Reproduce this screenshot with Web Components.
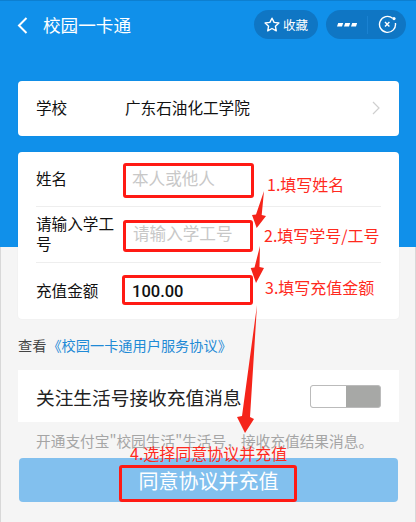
<!DOCTYPE html>
<html lang="zh"><head><meta charset="utf-8"><title>校园一卡通</title>
<style>
html,body{margin:0;padding:0;width:416px;height:522px;overflow:hidden;background:#f5f5f5}
</style></head><body>
<app-page>
  <nav-bar title-text="校园一卡通"></nav-bar>
  <white-card style="margin-top:37px"><form-row label="学校" height="55" chevron><span style="color:#111">广东石油化工学院</span></form-row></white-card>
  <white-card style="margin-top:16px">
    <form-row label="姓名" height="55" divider><span style="color:#c8c8c8;font-size:16.6px;margin-left:7px">本人或他人</span></form-row>
    <form-row label="请输入学工号" height="56" divider><span style="color:#c8c8c8;font-size:16.6px;margin-left:8px">请输入学工号</span></form-row>
    <form-row label="充值金额" height="56"><span style="color:#111;font-size:16.5px;font-weight:500;margin-left:7px;font-family:'Roboto','Noto Sans CJK SC',sans-serif">100.00</span></form-row>
  </white-card>
  <agree-link></agree-link>
  <toggle-row label="关注生活号接收充值消息"></toggle-row>
  <hint-text>开通支付宝"校园生活"生活号，接收充值结果消息。</hint-text>
  <submit-button>同意协议并充值</submit-button>
  <annotation-layer></annotation-layer>
</app-page>
<script>
const FONT = "'Noto Sans CJK SC','Noto Sans',sans-serif";
function def(name, html){
  customElements.define(name, class extends HTMLElement{
    connectedCallback(){
      if(this.shadowRoot) return;
      const r=this.attachShadow({mode:'open'});
      r.innerHTML = typeof html==='function'? html(this):html;
    }
  });
}
def('app-page',`<style>:host{display:flex;flex-direction:column;position:relative;width:416px;height:522px;overflow:hidden;box-sizing:border-box;font-family:${FONT};background:linear-gradient(#1090ea 0,#1090ea 246px,transparent 246px),linear-gradient(90deg,#d8d8d8 1px,#f5f5f5 1px,#f5f5f5 415px,#d8d8d8 415px);border-top:1px solid #0d7fd0}</style><slot></slot>`);
def('nav-bar',el=>`<style>
:host{display:flex;align-items:center;height:43px;color:#fff;box-sizing:border-box;padding:4px 10px 0 16px}
.t{font-size:17.6px;margin-left:15px;flex:1;line-height:1}
.pill{display:flex;align-items:center;height:29px;border-radius:15px;background:#0f76c4}
.fav{width:64px;margin-right:8px;justify-content:center;font-size:12.5px;gap:3px}
.menu{width:80px}
.dots{width:41px;display:flex;justify-content:center;border-right:1px solid #1a82d2;height:18px;align-items:center}
.x{flex:1;display:flex;justify-content:center}
</style>
<svg width="12" height="18" viewBox="0 0 12 18"><path d="M10.5 2 L3 9.5 L10.5 17" fill="none" stroke="#fff" stroke-width="2"/></svg>
<div class="t">${el.getAttribute('title-text')}</div>
<div class="pill fav"><svg width="16" height="15" viewBox="0 0 16 15"><path d="M8 1.2 L10.1 5.4 L14.9 6 L11.4 9.2 L12.3 13.8 L8 11.5 L3.7 13.8 L4.6 9.2 L1.1 6 L5.9 5.4 Z" fill="none" stroke="#fff" stroke-width="1.4" stroke-linejoin="round"/></svg><span>收藏</span></div>
<div class="pill menu"><div class="dots"><svg width="20" height="4" viewBox="0 0 20 4"><path d="M1.2 0h5l-1.2 3.5h-5zM8.2 0h5l-1.2 3.5h-5zM15.2 0h5l-1.2 3.5h-5z" fill="#fff"/></svg></div>
<div class="x"><svg width="19" height="19" viewBox="0 0 19 19"><path d="M14.6 3.2A8 8 0 1 0 17.4 8" fill="none" stroke="#fff" stroke-width="1.4"/><circle cx="16" cy="3.6" r="1.6" fill="#fff"/><path d="M7 7 L11.4 11.4 M11.4 7 L7 11.4" stroke="#fff" stroke-width="1.4"/></svg></div></div>`);
def('white-card',`<style>:host{display:block;margin:0 17px 0 18px;background:#fff;border-radius:4px;padding:0 18px;box-shadow:0 0 2px rgba(0,0,0,.05)}</style><slot></slot>`);
def('form-row',el=>{
  const h=el.getAttribute('height'), d=el.hasAttribute('divider'), c=el.hasAttribute('chevron');
  return `<style>:host{display:flex;align-items:center;height:${h}px;box-sizing:border-box;padding-bottom:3px;font-size:15.6px;color:#111;${d?'border-bottom:1px solid #eeeeee;':''}}
  .l{width:89px;flex:none;line-height:20px}
  .v{flex:1}
  svg{flex:none;margin-right:1px;margin-top:2px}</style>
  <div class="l">${el.getAttribute('label')}</div><div class="v"><slot></slot></div>
  ${c?'<svg width="8" height="14" viewBox="0 0 8 14"><path d="M1 1 L7 7 L1 13" fill="none" stroke="#cfcfcf" stroke-width="1.2"/></svg>':''}`;
});
def('agree-link',`<style>:host{display:block;margin:17px 0 0 18px;font-size:14.2px;line-height:18px;color:#444;height:18px;white-space:nowrap}span{color:#1f8ad6;margin-left:1px}</style>查看<span>《校园一卡通用户服务协议》</span>`);
def('toggle-row',el=>`<style>:host{display:flex;align-items:center;justify-content:space-between;box-sizing:border-box;height:52px;margin:16px 17px 0 18px;background:#fff;padding:0 18px;font-size:18.7px;color:#222}
.sw{width:71px;height:23px;box-sizing:border-box;border:1px solid #bbb;border-radius:3px;display:flex;overflow:hidden;background:#a7a8a6}
.on{width:35px;background:#fff}</style><span>${el.getAttribute('label')}</span><div class="sw"><div class="on"></div></div>`);
def('hint-text',`<style>:host{display:block;margin:9px 0 0 36px;font-size:14.7px;line-height:20px;color:#a5a5a5;white-space:nowrap;height:20px}</style><slot></slot>`);
def('submit-button',`<style>:host{display:flex;align-items:center;justify-content:center;height:44px;margin:7px 18px 0 19px;background:#82c0ee;border-radius:4px;color:#fff;font-size:20px}</style><slot></slot>`);
def('annotation-layer',`<style>:host{position:absolute;left:0;top:-1px;width:416px;height:522px;pointer-events:none}
.b{position:absolute;box-sizing:border-box;border:3px solid #ff1a14;border-radius:3px}
.n{position:absolute;color:#ff2a1e;font-size:16px;line-height:20px;white-space:nowrap;font-family:${FONT}}
svg{position:absolute;left:0;top:0}</style>
<div class="b" style="left:123px;top:163px;width:131px;height:35px"></div>
<div class="b" style="left:123px;top:220px;width:130px;height:32px"></div>
<div class="b" style="left:122px;top:275px;width:131px;height:30px"></div>
<div class="b" style="left:119px;top:465px;width:178px;height:37px"></div>
<div class="n" style="left:267px;top:174px">1.填写姓名</div>
<div class="n" style="left:264px;top:225px">2.填写学号/工号</div>
<div class="n" style="left:265px;top:277px">3.填写充值金额</div>
<div class="n" style="left:130px;top:443px">4.选择同意协议并充值</div>
<svg width="416" height="522" viewBox="0 0 416 522"><g fill="#f5241a">
<path d="M264 191 L261.7 215 L266 216 L256.7 228 L252 215 L256 214.5 Z"/>
<path d="M260 246 L259.5 267 L264 268 L256 283 L250.7 268 L254.5 267.5 Z"/>
<path d="M257 305 L250 417 L254 419 L245 433 L237 417 L242 416 Z"/>
</g></svg>`);
</script>
</body></html>
